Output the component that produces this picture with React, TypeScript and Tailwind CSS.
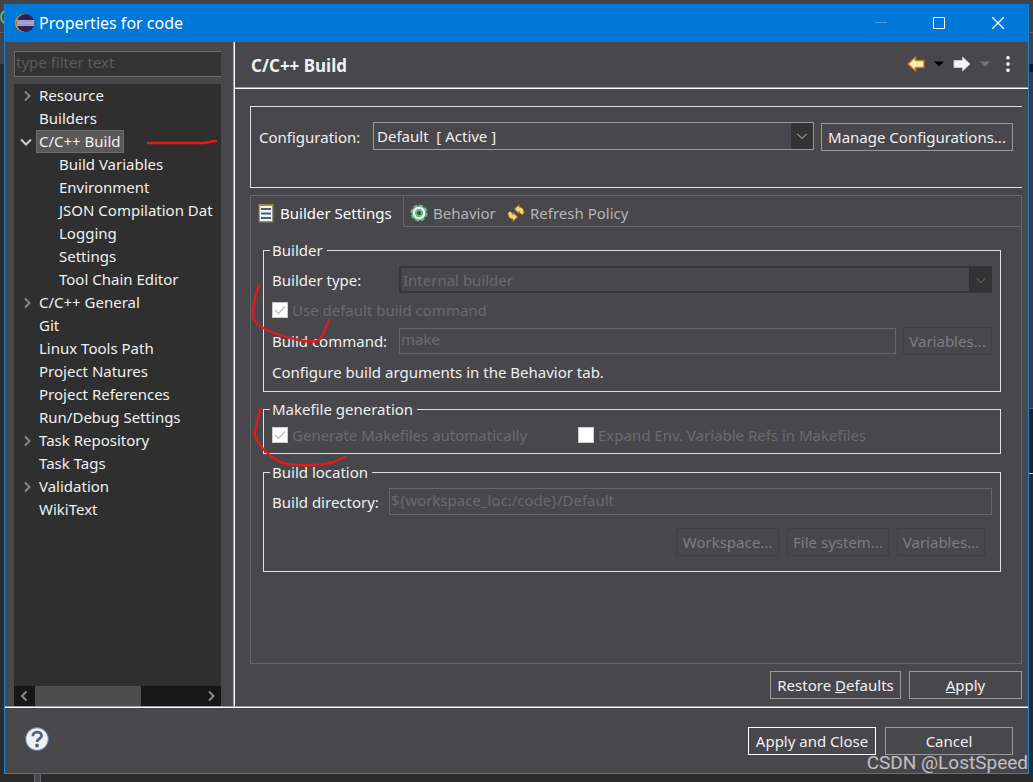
import { ReactNode, useState } from "react";

interface TreeNode {
  label: string;
  level: number;
  state?: "open" | "closed";
}

const TREE: TreeNode[] = [
  { label: "Resource", level: 0, state: "closed" },
  { label: "Builders", level: 0 },
  { label: "C/C++ Build", level: 0, state: "open" },
  { label: "Build Variables", level: 1 },
  { label: "Environment", level: 1 },
  { label: "JSON Compilation Dat", level: 1 },
  { label: "Logging", level: 1 },
  { label: "Settings", level: 1 },
  { label: "Tool Chain Editor", level: 1 },
  { label: "C/C++ General", level: 0, state: "closed" },
  { label: "Git", level: 0 },
  { label: "Linux Tools Path", level: 0 },
  { label: "Project Natures", level: 0 },
  { label: "Project References", level: 0 },
  { label: "Run/Debug Settings", level: 0 },
  { label: "Task Repository", level: 0, state: "closed" },
  { label: "Task Tags", level: 0 },
  { label: "Validation", level: 0, state: "closed" },
  { label: "WikiText", level: 0 },
];

function Chevron({ className, d }: { className: string; d: string }) {
  return (
    <svg className={className} viewBox="0 0 12 12" fill="none" stroke="currentColor">
      <path d={d} />
    </svg>
  );
}

function EclipseIcon() {
  return (
    <svg className="w-5 h-5" viewBox="0 0 20 20">
      <circle cx="9" cy="10" r="9" fill="#f7941e" />
      <circle cx="10.5" cy="10" r="9" fill="#2c2255" />
      <path d="M2 7h17.2v6H2z" fill="#a9a6cf" />
      <path d="M2 8.6h17.2v.5H2zM2 10.9h17.2v.5H2z" fill="#8581b8" />
    </svg>
  );
}

function TitleBar() {
  return (
    <header className="flex items-center h-[38px] pl-[10px] bg-[#0078d7] text-white">
      <EclipseIcon />
      <h1 className="flex-1 pl-1 text-[16px] leading-5">Properties for code</h1>
      <button type="button" aria-label="Minimize" disabled className="w-[58px] h-full flex items-center justify-center text-[#4c9fe2]">
        <svg className="w-3 h-3" viewBox="0 0 12 12" stroke="currentColor"><path d="M0 5.5h12" /></svg>
      </button>
      <button type="button" aria-label="Maximize" className="w-[58px] h-full flex items-center justify-center">
        <svg className="w-3 h-3" viewBox="0 0 12 12" fill="none" stroke="currentColor"><path d="M.5.5h11v11H.5z" /></svg>
      </button>
      <button type="button" aria-label="Close" className="w-[60px] h-full flex items-center justify-center">
        <svg className="w-3 h-3" viewBox="0 0 12 12" fill="none" stroke="currentColor" strokeWidth="1.3"><path d="M0 0l12 12M12 0L0 12" /></svg>
      </button>
    </header>
  );
}

function Sidebar() {
  const [filter, setFilter] = useState("");
  const [selected, setSelected] = useState("C/C++ Build");

  return (
    <aside className="w-[229px] shrink-0 flex flex-col pt-[9px] pl-[9px] pr-3 border-r border-[#a0a0a0]">
      <input
        type="text"
        aria-label="Filter"
        value={filter}
        onChange={(e) => setFilter(e.target.value)}
        placeholder="type filter text"
        className="h-[26px] pb-1 pl-px bg-[#333333] border border-r-0 border-[#6b6b6e] placeholder-[#5c5c5c] focus:outline-none"
      />
      <div className="relative flex-1 flex flex-col mt-[7px] bg-[#2f2f2f]">
        <ul className="flex-1 overflow-hidden">
          {TREE.map((n) => (
            <li key={n.label} className={`flex items-center h-[23px] overflow-hidden ${n.level ? "pl-[42px]" : "pl-[6px]"}`}>
              {n.level === 0 && (
                <span className="w-4 shrink-0">
                  {n.state === "closed" && <Chevron className="w-3 h-3 ml-px stroke-[1.8] text-[#8a8a8a]" d="M4 1.5L8.5 6L4 10.5" />}
                  {n.state === "open" && <Chevron className="w-3 h-3 stroke-2 text-[#d0d0d0]" d="M1 3.5L6 8.5L11 3.5" />}
                </span>
              )}
              <button
                type="button"
                onClick={() => setSelected(n.label)}
                className={`h-[23px] pb-[2px] px-[2px] whitespace-nowrap border ${selected === n.label ? "bg-[#595959] border-[#6e6e6e]" : "border-transparent"}`}
              >
                {n.label}
              </button>
            </li>
          ))}
        </ul>
        <div className="flex h-5 bg-[#171717] text-[#8a8a8a]">
          <button type="button" aria-label="Scroll left" className="w-[21px] flex items-center justify-center">
            <Chevron className="w-3 h-3 stroke-2" d="M7.500 1.5L3 6L7.500 10.5" />
          </button>
          <div className="flex-1"><div className="w-[64%] h-full bg-[#4d4d4d]" /></div>
          <button type="button" aria-label="Scroll right" className="w-[21px] flex items-center justify-center">
            <Chevron className="w-3 h-3 stroke-2" d="M4 1.5L8.5 6L4 10.5" />
          </button>
        </div>
        <svg className="absolute top-[52px] left-[132px] w-[72px] h-3" viewBox="0 0 72 12" fill="none" stroke="#e01b1b" strokeWidth="2.4" strokeLinecap="round">
          <path d="M2 7H57C62 7 65 5 70 5" />
        </svg>
      </div>
    </aside>
  );
}

function PageHeader() {
  return (
    <div className="flex items-center h-[46px] pl-4 pr-4 pb-px border-b border-[#a0a0a0]">
      <h2 className="flex-1 font-bold text-[17px] leading-5 pt-1">C/C++ Build</h2>
      <button type="button" aria-label="Back">
        <svg className="w-[18px] h-4" viewBox="0 0 18 16">
          <path d="M1 8L8.5 1V4.5H17V11.5H8.5V15Z" fill="#fff0b8" stroke="#c07c10" strokeWidth="1.4" strokeLinejoin="round" />
        </svg>
      </button>
      <button type="button" aria-label="Back history" className="ml-[9px]">
        <svg className="w-[10px] h-[6px]" viewBox="0 0 10 6"><path d="M0 .5h10L5 5.5z" fill="#000" /></svg>
      </button>
      <button type="button" aria-label="Forward" className="ml-[9px]">
        <svg className="w-[18px] h-4" viewBox="0 0 18 16">
          <path d="M17 8L9.5 1V4.5H1V11.5H9.5V15Z" fill="#f4f4f4" stroke="#c9c9c9" strokeLinejoin="round" />
        </svg>
      </button>
      <button type="button" aria-label="Forward history" className="ml-[9px]">
        <svg className="w-[10px] h-[6px]" viewBox="0 0 10 6"><path d="M0 .5h10L5 5.5z" fill="#77777a" /></svg>
      </button>
      <button type="button" aria-label="View menu" className="ml-[14px]">
        <svg className="w-2 h-[18px]" viewBox="0 0 8 18" fill="#fff" stroke="#222" strokeWidth=".6">
          <circle cx="4" cy="2.7" r="2.2" /><circle cx="4" cy="9" r="2.2" /><circle cx="4" cy="15.3" r="2.2" />
        </svg>
      </button>
    </div>
  );
}

function Btn({ children, className, disabled }: { children: ReactNode; className: string; disabled?: boolean }) {
  return (
    <button
      type="button"
      disabled={disabled}
      className={`h-7 shrink-0 border whitespace-nowrap ${disabled ? "text-[#7e7e7e] border-[#404042]" : "text-[#f0f0f0]"} ${className}`}
    >
      {children}
    </button>
  );
}

function Group({ title, className, children }: { title: string; className: string; children: ReactNode }) {
  return (
    <fieldset className={`min-w-0 px-[6px] border border-[#e0e0e0] ${className}`}>
      <legend className="h-5 leading-5 pl-[2px] pr-1">{title}</legend>
      {children}
    </fieldset>
  );
}

function Check({ label, checked }: { label: string; checked?: boolean }) {
  return (
    <label className="flex items-center gap-1 h-5 text-[#6b6b6b]">
      <span className="relative w-4 h-4">
        <input type="checkbox" disabled defaultChecked={checked} className="peer block appearance-none w-4 h-4 bg-white border border-[#cccccc]" />
        <svg className="absolute inset-0 w-4 h-4 hidden peer-checked:block" viewBox="0 0 16 16" fill="none" stroke="#c4c4c4" strokeWidth="1.5">
          <path d="M3 8L6.5 11.5L13 4.5" />
        </svg>
      </span>
      {label}
    </label>
  );
}

function BuilderSettings() {
  return (
    <div className="relative flex flex-col gap-[7px] pt-[13px] pl-3 pr-5">
      <Group title="Builder" className="pb-[9px]">
        <div className="flex flex-col gap-[7px] pt-[6px] px-[2px]">
          <div className="flex items-center">
            <label htmlFor="builder-type" className="w-[127px] shrink-0">Builder type:</label>
            <div className="relative flex-1 flex">
              <select id="builder-type" disabled className="appearance-none w-full h-[27px] pl-[2px] border-2 border-[#363636] text-[#6b6b6b] opacity-100">
                <option>Internal builder</option>
              </select>
              <span className="absolute inset-y-0 right-0 w-[23px] flex items-center justify-center bg-[#333333] text-[#77777a] pointer-events-none">
                <Chevron className="w-3 h-3" d="M1.5 4L6 8.5L10.5 4" />
              </span>
            </div>
          </div>
          <Check label="Use default build command" checked />
          <div className="flex items-center">
            <label htmlFor="build-command" className="w-[127px] shrink-0">Build command:</label>
            <input id="build-command" type="text" disabled defaultValue="make" className="flex-1 min-w-0 h-[26px] pb-1 pl-px border border-[#66666a] text-[#6b6b6b]" />
            <Btn disabled className="ml-[7px] w-[89px]">Variables...</Btn>
          </div>
          <p className="h-5 leading-5">Configure build arguments in the Behavior tab.</p>
        </div>
      </Group>

      <Group title="Makefile generation" className="pb-2">
        <div className="grid grid-cols-[306px_1fr] pt-[6px] px-[2px]">
          <Check label="Generate Makefiles automatically" checked />
          <Check label="Expand Env. Variable Refs in Makefiles" />
        </div>
      </Group>

      <Group title="Build location" className="mt-px pb-[15px]">
        <div className="flex items-center pt-[6px] px-[2px]">
          <label htmlFor="build-dir" className="w-[117px] shrink-0">Build directory:</label>
          <input id="build-dir" type="text" disabled defaultValue="${workspace_loc:/code}/Default" className="flex-1 min-w-0 h-[27px] pb-1 pl-px border border-[#66666a] text-[#6b6b6b]" />
        </div>
        <div className="flex justify-end gap-2 pt-[13px] pr-[9px]">
          <Btn disabled className="w-[103px]">Workspace...</Btn>
          <Btn disabled className="w-[102px]">File system...</Btn>
          <Btn disabled className="w-[88px]">Variables...</Btn>
        </div>
      </Group>

      <svg className="absolute top-14 left-0 w-24 h-[190px] pointer-events-none" viewBox="0 0 96 190" fill="none" stroke="#e01b1b" strokeWidth="2.4" strokeLinecap="round">
        <path d="M8 2C4 12 2 24 2 34C3 40 10 45 23 50C39 56 58 60 66 58C73 54 74 46 78 37" />
        <path d="M10 125C6 133 5 143 4 152C6 161 17 173 31 180C50 184 68 182 80 180L94 174" />
      </svg>
    </div>
  );
}

function TabFolder() {
  return (
    <section className="flex-1 flex flex-col mt-[7px] mr-[6px] border border-[#66666a]">
      <div role="tablist" className="flex h-[31px]">
        <button type="button" role="tab" aria-selected="true" className="w-[153px] flex items-center pt-[3px] pl-[7px] border-r border-[#66666a] text-white">
          <svg className="w-4 h-[19px]" viewBox="0 0 16 19">
            <path d="M1 1h14v17H1z" fill="#eaf6fa" stroke="#75704c" strokeWidth="1.4" />
            <path d="M.5 1h15" stroke="#b5862f" strokeWidth="1.6" />
            <path d="M3 5h10M3 9.5h10M3 14h10" stroke="#545b66" strokeWidth="1.8" />
          </svg>
          <span className="pl-[6px]">Builder Settings</span>
        </button>
        <button type="button" role="tab" aria-selected="false" className="w-[97px] flex items-center pt-[3px] pl-[6px] border-b border-[#66666a] text-[#b4b4b4]">
          <svg className="w-[18px] h-[18px]" viewBox="0 0 18 18">
            <circle cx="9" cy="9" r="7.4" fill="#6fb58c" stroke="#6fb58c" strokeWidth="2.2" strokeDasharray="3.8 2" />
            <circle cx="9" cy="9" r="5.2" fill="#6fb58c" stroke="#f2fbf4" strokeWidth="2" />
            <circle cx="9" cy="9" r="2" fill="#1f6a10" />
          </svg>
          <span className="pl-[5px]">Behavior</span>
        </button>
        <button type="button" role="tab" aria-selected="false" className="flex-1 flex items-center pt-[3px] pl-[6px] border-b border-[#66666a] text-[#b4b4b4]">
          <svg className="w-[18px] h-[18px]" viewBox="0 0 18 18" fill="#f7d774" stroke="#b07a1c" strokeWidth=".9" strokeLinejoin="round">
            <path d="M7.5 5L12 .8V3C14.8 3.2 16.8 5 17 9L15 10.8L12.8 8.8C12.8 7.8 12.6 7.5 12 7.5V9.5Z" />
            <path d="M10.5 13L6 17.2V15C3.2 14.8 1.2 13 1 9L3 7.2L5.2 9.2C5.2 10.2 5.4 10.5 6 10.5V8.5Z" />
          </svg>
          <span className="pl-[5px]">Refresh Policy</span>
        </button>
      </div>
      <BuilderSettings />
    </section>
  );
}

function ConfigurationBox() {
  return (
    <section className="flex items-start h-[82px] mr-[6px] pt-[15px] pl-2 pr-[9px] border border-r-0 border-[#e0e0e0]">
      <label htmlFor="configuration" className="w-[114px] shrink-0 leading-7 pt-px">Configuration:</label>
      <div className="relative flex-1 flex">
        <select id="configuration" className="appearance-none w-full h-7 pl-[3px] border border-[#9a9a9a] text-[#f0f0f0]">
          <option>Default&nbsp; [ Active ]</option>
        </select>
        <span className="absolute inset-y-px right-px w-[22px] flex items-center justify-center bg-[#333333] text-[#d0d0d0] pointer-events-none">
          <Chevron className="w-3 h-3" d="M1.5 4L6 8.5L10.5 4" />
        </span>
      </div>
      <Btn className="ml-[7px] mt-px w-[192px] border-[#9a9a9a]">Manage Configurations...</Btn>
    </section>
  );
}

function Footer() {
  return (
    <footer className="border-t border-[#a0a0a0]">
      <div className="relative flex items-center h-[66px] pl-5 pr-[15px] border-t border-white">
        <button type="button" aria-label="Help" className="mb-1">
          <svg className="w-6 h-6" viewBox="0 0 24 24">
            <circle cx="12" cy="12" r="11.4" fill="#f1f1f1" stroke="#5f789c" strokeWidth="1.2" />
            <path d="M7.8 9.2C7.8 3.8 16.8 4 16.6 8.8C16.5 11.6 12.2 11.8 12.2 15" fill="none" stroke="#51658a" strokeWidth="2.8" />
            <circle cx="12" cy="18.5" r="1.9" fill="#51658a" />
          </svg>
        </button>
        <div className="flex-1 flex justify-end gap-[9px]">
          <Btn className="w-32 border-white">Apply and Close</Btn>
          <Btn className="w-32 border-[#9a9a9a]">Cancel</Btn>
        </div>
        <span className="absolute right-0 bottom-0 font-['Roboto',sans-serif] text-[19px] leading-5 text-white/65">CSDN @LostSpeed</span>
      </div>
    </footer>
  );
}

// slivers of the IDE window that show around the dialog
function Backdrop() {
  return (
    <div className="absolute inset-0 overflow-hidden bg-[#2b2b2b]">
      <div className="h-16 bg-[#434246]">
        <svg className="w-4 h-8" viewBox="0 0 16 32" fill="none" stroke="#5fae7c" strokeWidth="2">
          <circle cx="8" cy="17" r="7" />
        </svg>
        <div className="h-px bg-[#606064]" />
      </div>
      <div className="h-2 ml-auto w-1 bg-[#18181b]" />
      <div className="h-[336px] ml-auto w-1 bg-[#3a3a3f]" />
      <div className="h-[65px] ml-auto w-1 border-t border-[#606064] bg-[#222224]" />
      <div className="h-px ml-auto w-1 bg-[#d0d0d0]" />
      <div className="absolute bottom-0 left-[34px] w-[7px] h-2 bg-[#48474c] border-x border-[#66666a]" />
    </div>
  );
}

export default function App() {
  return (
    <div className="relative min-h-screen flex flex-col pt-1 pl-1 pr-1 pb-2 font-['Noto_Sans','Open_Sans',sans-serif] text-[15px] leading-5 text-[#f0f0f0]">
      <Backdrop />
      <div className="relative flex-1 flex flex-col border border-t-0 border-[#1883d7] bg-[#48474c]">
        <TitleBar />
        <div className="flex-1 flex">
          <Sidebar />
          <main className="flex-1 min-w-0 flex flex-col border-l border-white">
            <PageHeader />
            <div className="flex-1 flex flex-col pt-[17px] pl-[15px] pb-[7px] border-t border-white">
              <ConfigurationBox />
              <TabFolder />
              <div className="flex justify-end gap-2 pt-[7px] pr-[6px]">
                <Btn className="w-[131px] border-[#9a9a9a]">Restore <u>D</u>efaults</Btn>
                <Btn className="w-[113px] border-[#9a9a9a]"><u>A</u>pply</Btn>
              </div>
            </div>
          </main>
        </div>
        <Footer />
      </div>
    </div>
  );
}
